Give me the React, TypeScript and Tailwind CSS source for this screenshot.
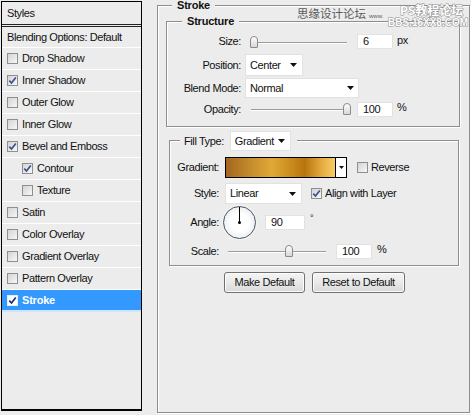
import React from 'react'

const styleRows = [
  { label: 'Drop Shadow', checked: false },
  { label: 'Inner Shadow', checked: true },
  { label: 'Outer Glow', checked: false },
  { label: 'Inner Glow', checked: false },
  { label: 'Bevel and Emboss', checked: true },
  { label: 'Contour', checked: true, sub: true },
  { label: 'Texture', checked: false, sub: true },
  { label: 'Satin', checked: false },
  { label: 'Color Overlay', checked: false },
  { label: 'Gradient Overlay', checked: false },
  { label: 'Pattern Overlay', checked: false },
]

function Check({ checked, selected }: { checked?: boolean; selected?: boolean }) {
  return (
    <span
      className={`w-[11px] h-[11px] shrink-0 border flex items-center justify-center ${
        selected
          ? 'border-[#dfeeff] bg-white'
          : 'border-[#8e8f8f] bg-linear-to-br from-[#d4d4d4] to-[#f7f7f7]'
      }`}
    >
      {checked && (
        <svg width="9" height="9" viewBox="0 0 9 9">
          <path
            d="M1.3 4.6 L3.5 7 L7.8 1.4"
            fill="none"
            stroke={selected ? '#1d2f6b' : '#3d4f8f'}
            strokeWidth="1.7"
          />
        </svg>
      )}
    </span>
  )
}

function Arrow() {
  return (
    <svg width="7" height="4" viewBox="0 0 7 4" className="shrink-0">
      <path d="M0 0 H7 L3.5 4 Z" fill="#111" />
    </svg>
  )
}

function Thumb() {
  return (
    <div className="w-[8px] h-[12px] rounded-t-[4px] rounded-b-[1px] border border-[#8a8a8a] bg-linear-to-b from-white to-[#d6d6d6]" />
  )
}

function Field({ value, w }: { value: string; w: string }) {
  return (
    <div className={`${w} h-[15px] bg-white border border-[#e2e2e2] flex items-center pl-[5px] shrink-0`}>
      {value}
    </div>
  )
}

export default function App() {
  return (
    <div className="w-[471px] h-[415px] bg-[#ececec] flex items-start relative overflow-hidden font-['Liberation_Sans',sans-serif] text-[11px] tracking-[-0.4px] text-[#111] leading-none">
      {/* Styles list */}
      <div className="ml-[1px] mt-[1px] w-[141px] h-[410px] border border-black border-b-2 flex flex-col">
        <div className="h-[23px] flex items-center pl-[5px] border-b border-[#222]">Styles</div>
        <div className="h-[1px]" />
        <div className="h-[22px] flex items-center pl-[5px] border-t border-[#222] border-b border-b-white">
          Blending Options: Default
        </div>
        {styleRows.map((r) => (
          <div
            key={r.label}
            className={`h-[22px] flex items-center gap-[4px] border-b border-white ${r.sub ? 'pl-[20px]' : 'pl-[5px]'}`}
          >
            <Check checked={r.checked} />
            <span>{r.label}</span>
          </div>
        ))}
        <div className="h-[22px] flex items-center gap-[4px] pl-[5px] bg-[#3399ff] border-b-2 border-[#cfe5fd] text-white font-bold tracking-[-0.2px]">
          <Check checked selected />
          <span>Stroke</span>
        </div>
      </div>

      {/* Stroke panel */}
      <div className="ml-[15px] mt-[5px] w-[313px] h-[408px] border border-[#8d8d8d] shadow-[inset_1px_1px_0_#fff,1px_1px_0_#fff] flex flex-col">
        <div className="-mt-[7px] ml-[14px] px-[5px] w-fit bg-[#ececec] font-bold leading-[12px] tracking-[-0.2px]">
          Stroke
        </div>

        {/* Structure */}
        <div className="mt-[10px] ml-[8px] w-[294px] h-[106px] border border-[#8d8d8d] shadow-[inset_1px_1px_0_#fff,1px_1px_0_#fff] flex flex-col">
          <div className="-mt-[7px] ml-[15px] px-[5px] w-fit bg-[#ececec] font-bold leading-[12px] tracking-[-0.2px]">
            Structure
          </div>

          <div className="mt-[6px] h-[17px] flex items-center">
            <span className="w-[74px] text-right">Size:</span>
            <div className="ml-[7px] w-[103px] h-[14px] relative">
              <div className="absolute left-[3px] right-[4px] top-[7px] h-[1px] bg-[#9c9c9c] shadow-[0_1px_0_#fff]" />
              <div className="absolute left-[2px] top-[1px]">
                <Thumb />
              </div>
            </div>
            <div className="ml-[6px]">
              <Field value="6" w="w-[36px]" />
            </div>
            <span className="ml-[4px] -mt-[3px]">px</span>
          </div>

          <div className="mt-[4px] h-[22px] flex items-center">
            <span className="w-[74px] text-right">Position:</span>
            <div className="ml-[4px] w-[58px] h-[22px] bg-white border border-[#e2e2e2] flex items-center justify-between pl-[4px] pr-[5px]">
              <span>Center</span>
              <Arrow />
            </div>
          </div>

          <div className="mt-[1px] h-[22px] flex items-center">
            <span className="w-[74px] text-right">Blend Mode:</span>
            <div className="ml-[4px] w-[114px] h-[20px] bg-white border border-[#e2e2e2] flex items-center justify-between pl-[4px] pr-[4px]">
              <span>Normal</span>
              <Arrow />
            </div>
          </div>

          <div className="mt-[2px] h-[16px] flex items-center">
            <span className="w-[74px] text-right">Opacity:</span>
            <div className="ml-[7px] w-[103px] h-[14px] relative">
              <div className="absolute left-[3px] right-[4px] top-[7px] h-[1px] bg-[#9c9c9c] shadow-[0_1px_0_#fff]" />
              <div className="absolute left-[95px] top-[1px]">
                <Thumb />
              </div>
            </div>
            <div className="ml-[6px]">
              <Field value="100" w="w-[36px]" />
            </div>
            <span className="ml-[4px] -mt-[4px]">%</span>
          </div>
        </div>

        {/* Fill Type */}
        <div className="mt-[13px] ml-[11px] w-[290px] h-[126px] border border-[#8d8d8d] shadow-[inset_1px_1px_0_#fff,1px_1px_0_#fff] flex flex-col">
          <div className="-mt-[10px] ml-[10px] px-[4px] pr-[6px] w-fit h-[20px] bg-[#ececec] flex items-center gap-[6px]">
            <span>Fill Type:</span>
            <div className="w-[61px] h-[20px] bg-white border border-[#e2e2e2] flex items-center justify-between pl-[4px] pr-[5px]">
              <span>Gradient</span>
              <Arrow />
            </div>
          </div>

          <div className="mt-[6px] h-[21px] flex items-center">
            <span className="w-[49px] text-right">Gradient:</span>
            <div className="ml-[6px] w-[122px] h-[21px] border border-black flex">
              <div className="flex-1 bg-[linear-gradient(to_right,#a2661f_0%,#c9902e_25%,#e0a936_42%,#c98a1c_60%,#b8740f_72%,#e4ac40_88%,#f8cd66_100%)]" />
              <div className="w-[11px] border-l border-black bg-white flex items-center justify-center">
                <svg width="5" height="3" viewBox="0 0 5 3">
                  <path d="M0 0 H5 L2.5 3 Z" fill="#111" />
                </svg>
              </div>
            </div>
            <div className="ml-[10px] flex items-center gap-[3px]">
              <Check />
              <span>Reverse</span>
            </div>
          </div>

          <div className="mt-[5px] h-[21px] flex items-center">
            <span className="w-[49px] text-right">Style:</span>
            <div className="ml-[6px] w-[77px] h-[21px] bg-white border border-[#e2e2e2] flex items-center justify-between pl-[4px] pr-[5px]">
              <span>Linear</span>
              <Arrow />
            </div>
            <div className="ml-[9px] flex items-center gap-[3px]">
              <Check checked />
              <span>Align with Layer</span>
            </div>
          </div>

          <div className="mt-[1px] h-[35px] flex items-center">
            <span className="w-[49px] text-right">Angle:</span>
            <div className="ml-[4px] w-[33px] h-[33px] rounded-full border-[1.5px] border-[#4a5566] bg-[radial-gradient(circle,#ffffff_40%,#dde1e6_100%)] shadow-[0_0_0_1px_#f4f4f4] flex justify-center">
              <div className="flex flex-col items-center">
                <div className="w-[1.5px] h-[15px] bg-black" />
                <div className="w-[3px] h-[3px] -mt-[1px] rounded-full bg-black" />
              </div>
            </div>
            <div className="ml-[9px]">
              <Field value="90" w="w-[40px]" />
            </div>
            <span className="ml-[5px] -mt-[8px] text-[9px]">°</span>
          </div>

          <div className="mt-[3px] h-[16px] flex items-center">
            <span className="w-[49px] text-right">Scale:</span>
            <div className="ml-[6px] w-[104px] h-[14px] relative">
              <div className="absolute left-[3px] right-[3px] top-[7px] h-[1px] bg-[#9c9c9c] shadow-[0_1px_0_#fff]" />
              <div className="absolute left-[60px] top-[1px]">
                <Thumb />
              </div>
            </div>
            <div className="ml-[7px]">
              <Field value="100" w="w-[36px]" />
            </div>
            <span className="ml-[5px] -mt-[4px]">%</span>
          </div>
        </div>

        <div className="mt-[6px] ml-[66px] flex gap-[7px]">
          <button className="w-[81px] h-[21px] rounded-[3px] border border-[#707070] bg-linear-to-b from-[#f4f4f4] via-[#e9e9e9] to-[#d9d9d9] shadow-[inset_0_0_0_1px_#fcfcfc] flex items-center justify-center">
            Make Default
          </button>
          <button className="w-[93px] h-[21px] rounded-[3px] border border-[#707070] bg-linear-to-b from-[#f4f4f4] via-[#e9e9e9] to-[#d9d9d9] shadow-[inset_0_0_0_1px_#fcfcfc] flex items-center justify-center">
            Reset to Default
          </button>
        </div>
      </div>

      {/* watermark */}
      <div className="absolute left-[297px] top-[8px] flex items-end gap-[3px] text-[#5a5a5a] tracking-normal">
        <span className="text-[11.5px] font-['Noto_Sans_CJK_SC',sans-serif]">思缘设计论坛</span>
        <span className="text-[6px] mb-[1px]">www.</span>
      </div>
      <span className="absolute left-[400px] top-[3px] text-[12px] leading-[13px] font-bold tracking-normal text-white font-['Noto_Sans_CJK_SC',sans-serif] [-webkit-text-stroke:1px_#8a8a8a] [paint-order:stroke_fill]">
        PS教程论坛
      </span>
      <span className="absolute left-[388px] top-[17px] text-[10px] leading-[11px] font-bold tracking-normal text-white [-webkit-text-stroke:1px_#8a8a8a] [paint-order:stroke_fill]">
        BBS.16XX8.COM
      </span>
    </div>
  )
}
